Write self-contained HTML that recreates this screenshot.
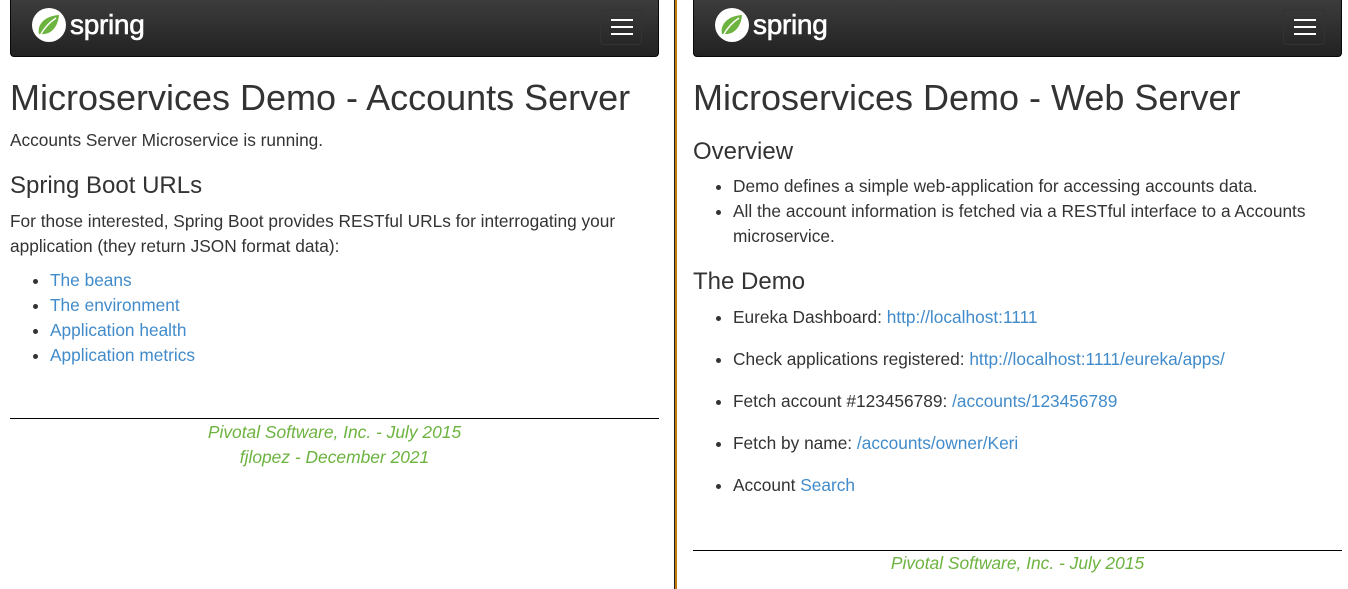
<!DOCTYPE html>
<html><head><style>
body{margin:0;width:1348px;height:589px;overflow:hidden;background:#fff;font-family:"Liberation Sans",sans-serif;color:#333;font-size:17.3px;line-height:25px;position:relative}
.div1{position:absolute;left:674px;top:0;width:1px;height:589px;background:#222}
.div2{position:absolute;left:675px;top:0;width:2px;height:589px;background:#c27c0e}
.p{position:absolute;top:0;width:649px}
.nav{height:57px;border-radius:0 0 4px 4px;background:linear-gradient(#3c3c3c,#222);border:1px solid #080808;border-top:none;box-sizing:border-box;position:relative}
.logo{position:absolute;left:20px;top:7px;display:flex;align-items:center}
.logo span{color:#fff;font-size:28px;font-weight:normal;margin-left:3px;letter-spacing:-0.3px;line-height:30px;-webkit-text-stroke:0.6px #fff}
.btn{position:absolute;right:16px;top:9px;width:42px;height:36px;border:1px solid #333;border-radius:4px;box-sizing:border-box}
.btn i{position:absolute;left:10px;width:22px;height:2px;background:#fff}
h1{font-size:36px;font-weight:normal;margin:0;line-height:40px;position:absolute;top:78px;white-space:nowrap}
h3{font-size:24px;font-weight:normal;margin:0;line-height:26px;position:absolute;white-space:nowrap}
.t{position:absolute;margin:0}
ul{position:absolute;margin:0;padding-left:40px}
a{color:#428bca;text-decoration:none}
hr{position:absolute;left:0;width:649px;margin:0;border:none;border-top:1px solid #000}
.f{position:absolute;width:649px;text-align:center;color:#6db33f;font-style:italic;font-size:17.4px}
</style></head><body>
<div class="div1"></div><div class="div2"></div>

<div class="p" style="left:10px">
<div class="nav"><div class="logo"><svg width="36" height="36" viewBox="0 0 36 36"><circle cx="18" cy="18" r="17" fill="#fff"/><path d="M8 27C6 18 13 9 28 8C27 20 20 28 10 27Z" fill="#6db33f"/><path d="M10 27C14 20 19 15 25 11" stroke="#fff" stroke-width="1.5" fill="none"/></svg><span>spring</span></div>
<div class="btn"><i style="top:9px"></i><i style="top:16px"></i><i style="top:23px"></i></div></div>
<h1>Microservices Demo - Accounts Server</h1>
<p class="t" style="top:128px">Accounts Server Microservice is running.</p>
<h3 style="top:173px">Spring Boot URLs</h3>
<p class="t" style="top:209px;width:630px">For those interested, Spring Boot provides RESTful URLs for interrogating your application (they return JSON format data):</p>
<ul style="top:268px"><li><a>The beans</a></li><li><a>The environment</a></li><li><a>Application health</a></li><li><a>Application metrics</a></li></ul>
<hr style="top:418px">
<div class="f" style="top:420px">Pivotal Software, Inc. - July 2015<br>fjlopez - December 2021</div>
</div>

<div class="p" style="left:693px">
<div class="nav"><div class="logo"><svg width="36" height="36" viewBox="0 0 36 36"><circle cx="18" cy="18" r="17" fill="#fff"/><path d="M8 27C6 18 13 9 28 8C27 20 20 28 10 27Z" fill="#6db33f"/><path d="M10 27C14 20 19 15 25 11" stroke="#fff" stroke-width="1.5" fill="none"/></svg><span>spring</span></div>
<div class="btn"><i style="top:9px"></i><i style="top:16px"></i><i style="top:23px"></i></div></div>
<h1>Microservices Demo - Web Server</h1>
<h3 style="top:139px">Overview</h3>
<ul style="top:174px;width:600px"><li>Demo defines a simple web-application for accessing accounts data.</li><li>All the account information is fetched via a RESTful interface to a Accounts microservice.</li></ul>
<h3 style="top:269px">The Demo</h3>
<ul style="top:296px;line-height:42px"><li>Eureka Dashboard: <a>http://localhost:1111</a></li><li>Check applications registered: <a>http://localhost:1111/eureka/apps/</a></li><li>Fetch account #123456789: <a>/accounts/123456789</a></li><li>Fetch by name: <a>/accounts/owner/Keri</a></li><li>Account <a>Search</a></li></ul>
<hr style="top:550px">
<div class="f" style="top:551px">Pivotal Software, Inc. - July 2015</div>
</div>
</body></html>
